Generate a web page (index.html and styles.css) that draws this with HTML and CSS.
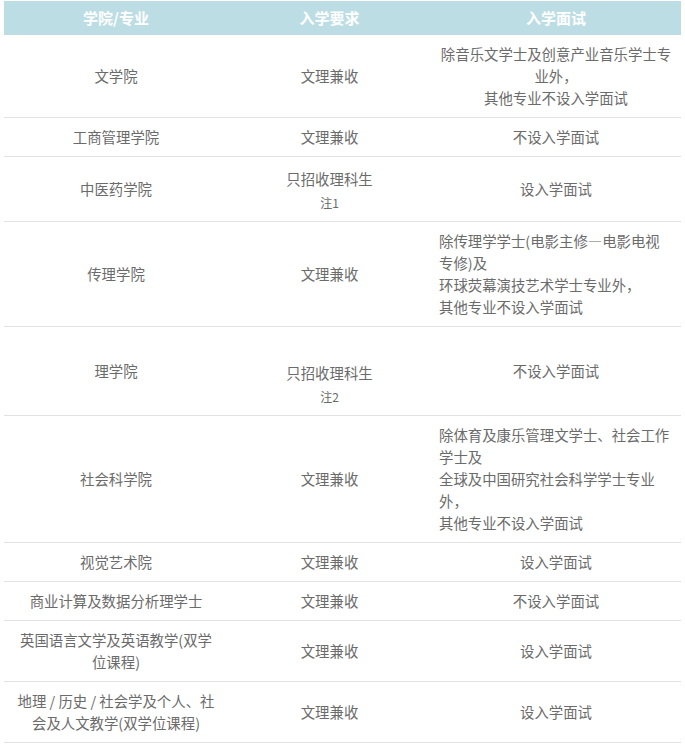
FILE: index.html
```html
<!DOCTYPE html>
<html lang="zh-CN">
<head>
<meta charset="utf-8">
<title>入学要求</title>
<link rel="stylesheet" href="styles.css">
</head>
<body>
<div class="wrap">
<table class="adm">
  <colgroup>
    <col class="c1"><col class="c2"><col class="c3">
  </colgroup>
  <thead>
    <tr><th>学院/专业</th><th>入学要求</th><th>入学面试</th></tr>
  </thead>
  <tbody>
    <tr>
      <td class="name">文学院</td>
      <td>文理兼收</td>
      <td>除音乐文学士及创意产业音乐学士专业外，<br>其他专业不设入学面试</td>
    </tr>
    <tr>
      <td class="name">工商管理学院</td>
      <td>文理兼收</td>
      <td>不设入学面试</td>
    </tr>
    <tr>
      <td class="name">中医药学院</td>
      <td class="noted"><div>只招收理科生</div><div class="note">注1</div></td>
      <td>设入学面试</td>
    </tr>
    <tr>
      <td class="name">传理学院</td>
      <td>文理兼收</td>
      <td class="left">除传理学学士(电影主修—电影电视专修)及<br>环球荧幕演技艺术学士专业外，<br>其他专业不设入学面试</td>
    </tr>
    <tr>
      <td class="name">理学院</td>
      <td class="noted"><div class="spacer"></div><div>只招收理科生</div><div class="note">注2</div></td>
      <td>不设入学面试</td>
    </tr>
    <tr>
      <td class="name">社会科学院</td>
      <td>文理兼收</td>
      <td class="left">除体育及康乐管理文学士、社会工作学士及<br>全球及中国研究社会科学学士专业外，<br>其他专业不设入学面试</td>
    </tr>
    <tr>
      <td class="name">视觉艺术院</td>
      <td>文理兼收</td>
      <td>设入学面试</td>
    </tr>
    <tr>
      <td class="name">商业计算及数据分析理学士</td>
      <td>文理兼收</td>
      <td>不设入学面试</td>
    </tr>
    <tr>
      <td class="name">英国语言文学及英语教学(双学位课程)</td>
      <td>文理兼收</td>
      <td>设入学面试</td>
    </tr>
    <tr>
      <td class="name">地理 / 历史 / 社会学及个人、社会及人文教学(双学位课程)</td>
      <td>文理兼收</td>
      <td>设入学面试</td>
    </tr>
  </tbody>
</table>
</div>
</body>
</html>
```
FILE: styles.css
```css
html, body {
  margin: 0;
  padding: 0;
  background: #ffffff;
}
.wrap {
  padding: 1px 4px 0 4px;
}
.adm {
  width: 677px;
  border-collapse: collapse;
  table-layout: fixed;
  font-family: "Noto Sans CJK SC", "Microsoft YaHei", sans-serif;
  font-size: 14.4px;
  color: #6b6b6b;
}
.c1 { width: 224px; }
.c2 { width: 203px; }
.c3 { width: 250px; }
.adm th {
  background: #bddde4;
  color: #ffffff;
  font-weight: bold;
  font-size: 15px;
  height: 34px;
  padding: 0 8px;
  line-height: 22px;
  text-align: center;
  vertical-align: middle;
}
.adm td {
  padding: 8px 8px;
  line-height: 22px;
  text-align: center;
  vertical-align: middle;
  border-bottom: 1px solid #e2e2e2;
  word-break: break-all;
}
.adm td.name {
  padding-left: 10px;
  padding-right: 10px;
}
.adm td.noted {
  padding-top: 11px;
  padding-bottom: 5px;
}
.adm td.left {
  text-align: left;
}
.note {
  font-size: 12px;
  line-height: 26px;
}
.spacer {
  height: 24px;
}
```
